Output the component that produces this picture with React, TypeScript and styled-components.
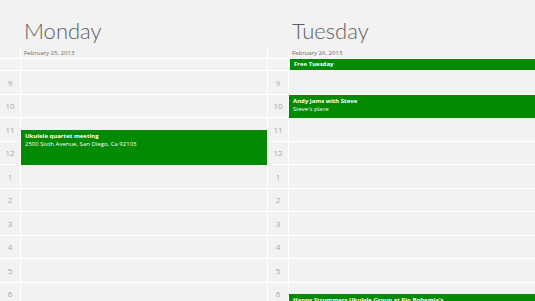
import React from "react";
import styled, { createGlobalStyle } from "styled-components";

const Global = createGlobalStyle`
  html, body { margin: 0; padding: 0; background: #f2f2f2; overflow: hidden; }
  body { font-family: "Open Sans", "Noto Sans", sans-serif; }
`;

const ROW = 23.5;

const Page = styled.div`
  display: flex;
  width: 535px;
  height: 301px;
  overflow: hidden;
  background: #f2f2f2;
`;

const Day = styled.section<{ $w: number }>`
  flex: 0 0 ${(p) => p.$w}px;
  display: flex;
  flex-direction: column;
`;

const Title = styled.h1`
  margin: 0;
  flex: 0 0 48px;
  box-sizing: border-box;
  padding: 18px 0 0 24px;
  font-family: "Lato", "Open Sans", sans-serif;
  font-weight: 300;
  font-size: 22px;
  line-height: 26px;
  color: #5e5e5e;
`;

const Body = styled.div<{ $last: boolean }>`
  display: flex;
  border-right: ${(p) => (p.$last ? "none" : "1px solid #fff")};
`;

const GutterCol = styled.div`
  flex: 0 0 20px;
  display: flex;
  flex-direction: column;
  border-right: 1px solid #fff;
`;

const ContentCol = styled.div`
  flex: 1;
  display: flex;
  flex-direction: column;
  position: relative;
`;

const Slot = styled.div<{ $h: number }>`
  flex: 0 0 ${(p) => p.$h}px;
  border-bottom: 1px solid #fff;
`;

const HourLabel = styled.div`
  flex: 0 0 ${ROW - 1}px;
  border-bottom: 1px solid #fff;
  display: flex;
  align-items: center;
  justify-content: center;
  font-size: 8px;
  color: #a8a8a8;
`;

const DateText = styled.div`
  font-size: 6px;
  color: #6b6b6b;
  padding: 2px 0 0 3px;
  line-height: 7px;
`;

const Event = styled.div<{ $inset: number }>`
  position: absolute;
  left: ${(p) => p.$inset}px;
  right: 0;
  background: #038a03;
  color: #fff;
  padding: 2px 4px;
  box-sizing: border-box;
  overflow: hidden;
`;

const EvTitle = styled.div`
  font-size: 6px;
  font-weight: 700;
  line-height: 8px;
  white-space: nowrap;
`;

const EvSub = styled.div`
  font-size: 6px;
  line-height: 8px;
  white-space: nowrap;
`;

const hours = ["9", "10", "11", "12", "1", "2", "3", "4", "5", "6"];
const DATE_H = 10;
const ALLDAY_H = 11;
const HOURS_TOP = DATE_H + 1 + ALLDAY_H + 1;

type Ev = { start: number; dur: number; title: string; sub?: string; inset?: number };

function DayView({
  name,
  date,
  width,
  last,
  allDay,
  events,
}: {
  name: string;
  date: string;
  width: number;
  last: boolean;
  allDay?: string;
  events: Ev[];
}) {
  return (
    <Day $w={width}>
      <Title>{name}</Title>
      <Body $last={last}>
        <GutterCol>
          <Slot $h={DATE_H} />
          <Slot $h={ALLDAY_H} />
          {hours.map((h) => (
            <HourLabel key={h}>{h}</HourLabel>
          ))}
        </GutterCol>
        <ContentCol>
          <Slot $h={DATE_H}>
            <DateText>{date}</DateText>
          </Slot>
          <Slot $h={ALLDAY_H} />
          {hours.map((h) => (
            <Slot key={h} $h={ROW - 1} />
          ))}
          {allDay && (
            <Event
              $inset={1}
              style={{ top: DATE_H + 1, height: ALLDAY_H, padding: "1px 4px" }}
            >
              <EvTitle>{allDay}</EvTitle>
            </Event>
          )}
          {events.map((e) => (
            <Event
              key={e.title}
              $inset={e.inset ?? 0}
              style={{ top: HOURS_TOP + e.start * ROW, height: e.dur * ROW - 0.5 }}
            >
              <EvTitle>{e.title}</EvTitle>
              {e.sub && <EvSub>{e.sub}</EvSub>}
            </Event>
          ))}
        </ContentCol>
      </Body>
    </Day>
  );
}

export default function App() {
  return (
    <Page>
      <Global />
      <DayView
        name="Monday"
        date="February 25, 2013"
        width={268}
        last={false}
        events={[
          {
            start: 2.5,
            dur: 1.5,
            title: "Ukulele quartet meeting",
            sub: "2500 Sixth Avenue, San Diego, Ca 92103",
          },
        ]}
      />
      <DayView
        name="Tuesday"
        date="February 26, 2013"
        width={267}
        last
        allDay="Free Tuesday"
        events={[
          { start: 1, dur: 1, title: "Andy jams with Steve", sub: "Steve's place" },
          { start: 9.5, dur: 1, title: "Happy Strummers Ukulele Group at Rio Bohemia's" },
        ]}
      />
    </Page>
  );
}
